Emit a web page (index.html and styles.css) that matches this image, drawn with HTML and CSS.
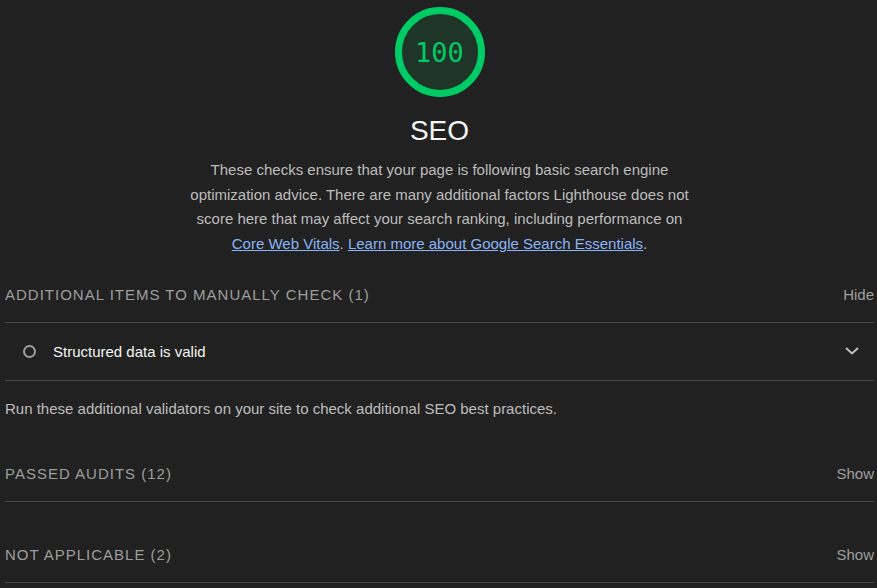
FILE: index.html
```html
<!DOCTYPE html>
<html>
<head>
<meta charset="utf-8">
<link rel="stylesheet" href="styles.css">
</head>
<body>
<div class="report">
  <div class="header">
    <div class="gauge">
      <svg class="gauge-svg" viewBox="0 0 90 90" width="90" height="90">
        <circle cx="45" cy="45" r="41.5" fill="#1f3528" stroke="#00cc66" stroke-width="7"/>
      </svg>
      <div class="gauge-score">100</div>
    </div>
    <div class="gauge-label">SEO</div>
    <div class="description">These checks ensure that your page is following basic search engine optimization advice. There are many additional factors Lighthouse does not score here that may affect your search ranking, including performance on <a href="#">Core Web Vitals</a>. <a href="#">Learn more about Google Search Essentials</a>.</div>
  </div>

  <div class="group">
    <div class="group-head group-head--first">
      <span class="group-title">Additional items to manually check (1)</span>
      <span class="toggle">Hide</span>
    </div>
    <div class="audit">
      <span class="audit-icon"></span>
      <span class="audit-title">Structured data is valid</span>
      <svg class="chevron" viewBox="0 0 14 8" width="14" height="8"><path d="M1 1l6 5.5 6-5.5" fill="none" stroke="#bdbdbd" stroke-width="2"/></svg>
    </div>
    <div class="group-desc">Run these additional validators on your site to check additional SEO best practices.</div>
  </div>

  <div class="group">
    <div class="group-head">
      <span class="group-title">Passed audits (12)</span>
      <span class="toggle">Show</span>
    </div>
  </div>

  <div class="group">
    <div class="group-head group-head--last">
      <span class="group-title">Not applicable (2)</span>
      <span class="toggle">Show</span>
    </div>
  </div>
</div>
</body>
</html>
```
FILE: styles.css
```css
html, body {
  margin: 0;
  padding: 0;
  background: #212121;
  height: 100%;
  overflow: hidden;
}
body {
  font-family: "Liberation Sans", Arial, sans-serif;
  color: #f5f5f5;
}
.report {
  padding: 7px 3px 0 5px;
}
.header {
  display: flex;
  flex-direction: column;
  align-items: center;
}
.gauge {
  position: relative;
  width: 90px;
  height: 90px;
}
.gauge-svg {
  display: block;
}
.gauge-score {
  position: absolute;
  inset: 0;
  display: flex;
  align-items: center;
  justify-content: center;
  font-family: "DejaVu Sans Mono", "Liberation Mono", monospace;
  font-size: 27px;
  color: #00cc66;
}
.gauge-label {
  margin-top: 17px;
  font-size: 28px;
  line-height: 34px;
  color: #f5f5f5;
}
.description {
  margin-top: 10px;
  width: 500px;
  text-align: center;
  font-size: 15px;
  line-height: 24.7px;
  color: #bdbdbd;
}
.description a {
  color: #8ab4f8;
  text-decoration: underline;
}
.group-head {
  display: flex;
  justify-content: space-between;
  align-items: center;
  line-height: 20px;
  padding: 42px 0 17px;
  border-bottom: 1px solid #464646;
}
.group-head--first {
  padding-top: 28px;
}
.group-head--last {
  padding-top: 43px;
}
.group-title {
  text-transform: uppercase;
  font-size: 15px;
  letter-spacing: 1px;
  color: #9e9e9e;
}
.toggle {
  font-size: 15px;
  color: #9e9e9e;
}
.audit {
  display: flex;
  align-items: center;
  height: 58px;
  border-bottom: 1px solid #464646;
  box-sizing: border-box;
  padding: 0 15px 0 18px;
}
.audit-icon {
  width: 9px;
  height: 9px;
  border: 2px solid #9e9e9e;
  border-radius: 50%;
  margin-right: 17px;
}
.audit-title {
  flex: 1;
  font-size: 15px;
  color: #f5f5f5;
}
.chevron {
  display: block;
}
.group-desc {
  font-size: 15px;
  line-height: 20px;
  color: #bdbdbd;
  padding: 18px 0 3px;
}
```
